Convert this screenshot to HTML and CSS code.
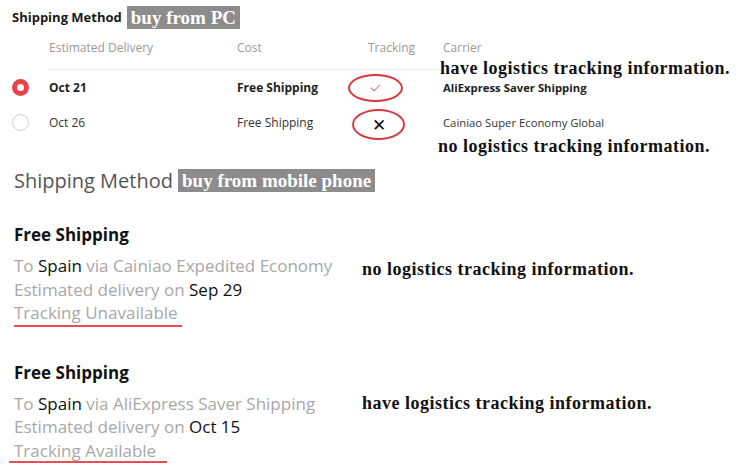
FILE: index.html
```html
<!DOCTYPE html>
<html lang="en">
<head>
    <meta charset="UTF-8">
    <title>Shipping Method</title>
    <link rel="stylesheet" href="styles.css">
</head>
<body>

<section class="pc">
    <div class="pc-title">
        <h2>Shipping Method</h2>
        <span class="tag">buy from PC</span>
    </div>

    <div class="ship-table">
        <div class="row head">
            <div class="cell radio-cell"></div>
            <div class="cell line">Estimated Delivery</div>
            <div class="cell line">Cost</div>
            <div class="cell line">Tracking</div>
            <div class="cell line carrier">Carrier</div>
        </div>
        <div class="row selected">
            <div class="cell radio-cell"><span class="radio on"></span></div>
            <div class="cell">Oct 21</div>
            <div class="cell">Free Shipping</div>
            <div class="cell"><span class="ring ring-1"><span class="check"></span></span></div>
            <div class="cell carrier small">AliExpress Saver Shipping</div>
        </div>
        <div class="row">
            <div class="cell radio-cell"><span class="radio"></span></div>
            <div class="cell">Oct 26</div>
            <div class="cell">Free Shipping</div>
            <div class="cell"><span class="ring ring-2">&#x2715;</span></div>
            <div class="cell carrier small">Cainiao Super Economy Global</div>
        </div>
    </div>

    <p class="note note-pc-have">have logistics tracking information.</p>
    <p class="note note-pc-no">no logistics tracking information.</p>
</section>

<section class="mobile">
    <div class="m-title">
        <h2>Shipping Method</h2>
        <span class="tag">buy from mobile phone</span>
    </div>

    <div class="option">
        <h3>Free Shipping</h3>
        <p>To <b>Spain</b> via Cainiao Expedited Economy</p>
        <p>Estimated delivery on <b>Sep 29</b></p>
        <p class="track track-1">Tracking Unavailable</p>
        <p class="note note-m note-m1">no logistics tracking information.</p>
    </div>

    <div class="option second">
        <h3>Free Shipping</h3>
        <p>To <b>Spain</b> via AliExpress Saver Shipping</p>
        <p>Estimated delivery on <b>Oct 15</b></p>
        <p class="track track-2">Tracking Available</p>
        <p class="note note-m note-m2">have logistics tracking information.</p>
    </div>
</section>

</body>
</html>
```

FILE: styles.css
```css
body {
    margin: 0;
    background-color: #ffffff;
    font-family: 'Open Sans', sans-serif;
    color: #1a1a1a;
    width: 750px;
    height: 468px;
    overflow: hidden;
}

.tag {
    background-color: #8c8c8c;
    color: #ffffff;
    font-family: 'Liberation Serif', serif;
    font-weight: bold;
    padding: 0 4px;
}

.note {
    position: absolute;
    margin: 0;
    font-family: 'Liberation Serif', serif;
    font-weight: bold;
    font-size: 18px;
    line-height: 20px;
    letter-spacing: 0.5px;
    color: #111;
    white-space: nowrap;
}

/* PC part */

.pc {
    position: relative;
    padding: 4px 0 0 12px;
    height: 156px;
}

.pc-title {
    display: flex;
    align-items: center;
    gap: 5px;
    height: 26px;
}

.pc-title h2 {
    margin: 0;
    font-size: 13px;
    font-weight: 700;
}

.pc-title .tag {
    font-size: 19px;
    line-height: 23px;
}

.ship-table {
    margin-top: 8px;
}

.row {
    display: grid;
    grid-template-columns: 37px 188px 131px 75px 290px;
    align-items: center;
    height: 35px;
    font-size: 12px;
    color: #333;
}

.row.head {
    align-items: start;
    height: 32px;
    font-size: 12px;
    color: #999;
    line-height: 20px;
}

.row.head .line {
    height: 31px;
    border-bottom: 1px solid #eeeeee;
}

.row.head .carrier {
    border-bottom: none;
}

.row.selected {
    font-weight: 700;
    color: #222;
}

.small {
    font-size: 11.3px;
}

.radio {
    display: block;
    width: 17px;
    height: 17px;
    border: 1px solid #cfcfcf;
    border-radius: 50%;
    box-sizing: border-box;
}

.radio.on {
    border: 5.5px solid #e8434b;
    background-color: #ffffff;
}

.ring {
    display: flex;
    align-items: center;
    justify-content: center;
    border: 2px solid #d9383f;
    border-radius: 50%;
    box-sizing: border-box;
}

.ring-1 {
    width: 55px;
    height: 28px;
    margin-left: -20px;
}

.ring-2 {
    width: 53px;
    height: 31px;
    margin-left: -16px;
    margin-top: 3px;
    font-size: 17px;
    font-weight: 400;
    color: #111;
}

.check {
    width: 8px;
    height: 4px;
    border-left: 1.5px solid #c46a8a;
    border-bottom: 1.5px solid #c46a8a;
    transform: rotate(-45deg);
    margin-top: -2px;
}

.note-pc-have {
    left: 440px;
    top: 58px;
}

.note-pc-no {
    left: 438px;
    top: 136px;
}

/* mobile part */

.mobile {
    margin-top: 7px;
    padding-left: 14px;
}

.m-title {
    display: flex;
    align-items: center;
    gap: 5px;
    height: 26px;
}

.m-title h2 {
    margin: 0;
    font-size: 20px;
    font-weight: 400;
    color: #555;
}

.m-title .tag {
    font-size: 19px;
    line-height: 23px;
}

.option {
    position: relative;
    margin-top: 30px;
}

.option.second {
    margin-top: 34px;
}

.option h3 {
    margin: 0 0 7px 0;
    font-size: 17px;
    font-weight: 700;
    line-height: 24px;
    color: #111;
}

.option p {
    margin: 0;
    font-size: 17px;
    line-height: 23.5px;
    color: #a8a8a8;
}

.option b {
    font-weight: 400;
    color: #111;
}

.option .track {
    display: inline-block;
    border-bottom: 2px solid #e5514f;
}

.option .track-1 {
    width: 168px;
}

.option .track-2 {
    width: 153px;
    margin-left: -5px;
    padding-left: 5px;
    line-height: 20px;
    margin-top: 2px;
}

.option .note-m {
    left: 348px;
    font-size: 18px;
    line-height: 20px;
    color: #111;
}

.option .note-m1 {
    top: 36px;
}

.option .note-m2 {
    top: 32px;
}
```
